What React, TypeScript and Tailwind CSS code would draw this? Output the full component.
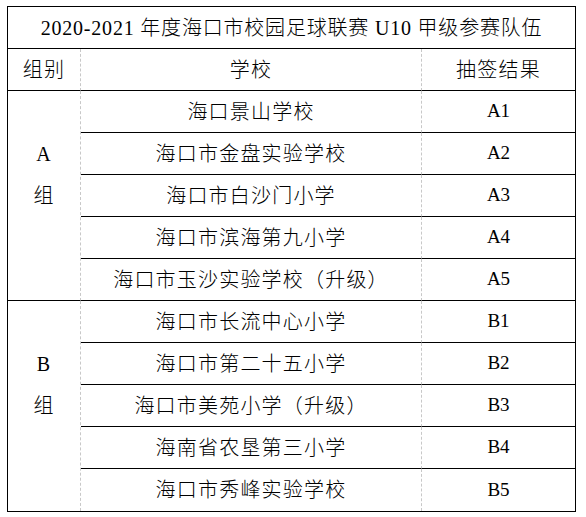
const groups = [
  {
    label: "A",
    rows: [
      ["海口景山学校", "A1"],
      ["海口市金盘实验学校", "A2"],
      ["海口市白沙门小学", "A3"],
      ["海口市滨海第九小学", "A4"],
      ["海口市玉沙实验学校（升级）", "A5"],
    ],
  },
  {
    label: "B",
    rows: [
      ["海口市长流中心小学", "B1"],
      ["海口市第二十五小学", "B2"],
      ["海口市美苑小学（升级）", "B3"],
      ["海南省农垦第三小学", "B4"],
      ["海口市秀峰实验学校", "B5"],
    ],
  },
];

const font = "font-['Liberation_Serif','Noto_Sans_CJK_SC',serif]";
// dashed grey divider on the right, solid black for the rest
const dashR = "border-r border-solid [border-right-style:dashed] border-r-[#c8c8c8]";

export default function App() {
  return (
    <div className={`min-h-[517px] bg-white pl-[7px] pt-[6px] text-black ${font}`}>
      <div className="w-[569px] border border-black grid grid-cols-[73px_341px_153px] grid-rows-[repeat(12,42px)] text-[20px] tracking-[1.2px] font-light">
        <div className="col-span-3 flex items-center justify-center border-b border-black tracking-[0.8px]">
          2020-2021 年度海口市校园足球联赛 U10 甲级参赛队伍
        </div>
        <div className={`flex items-center justify-center border-b border-b-black ${dashR}`}>
          组别
        </div>
        <div className={`flex items-center justify-center border-b border-b-black ${dashR}`}>
          学校
        </div>
        <div className="flex items-center justify-center border-b border-black">
          抽签结果
        </div>
        {groups.map((g, gi) => (
          <div key={g.label} className="contents">
            <div
              className={`row-span-5 flex flex-col items-center justify-center pb-[42px] leading-[42px] ${dashR} ${
                gi === 0 ? "border-b border-b-black" : ""
              }`}
            >
              <span>{g.label}</span>
              <span>组</span>
            </div>
            {g.rows.map(([school, result], ri) => {
              const last = gi === 1 && ri === 4;
              return (
                <div key={result} className="contents">
                  <div
                    className={`flex items-center justify-center ${dashR} ${
                      last ? "" : "border-b border-b-black"
                    }`}
                  >
                    {school}
                  </div>
                  <div
                    className={`flex items-center justify-center text-[19px] tracking-normal ${
                      last ? "" : "border-b border-black"
                    }`}
                  >
                    {result}
                  </div>
                </div>
              );
            })}
          </div>
        ))}
      </div>
    </div>
  );
}
